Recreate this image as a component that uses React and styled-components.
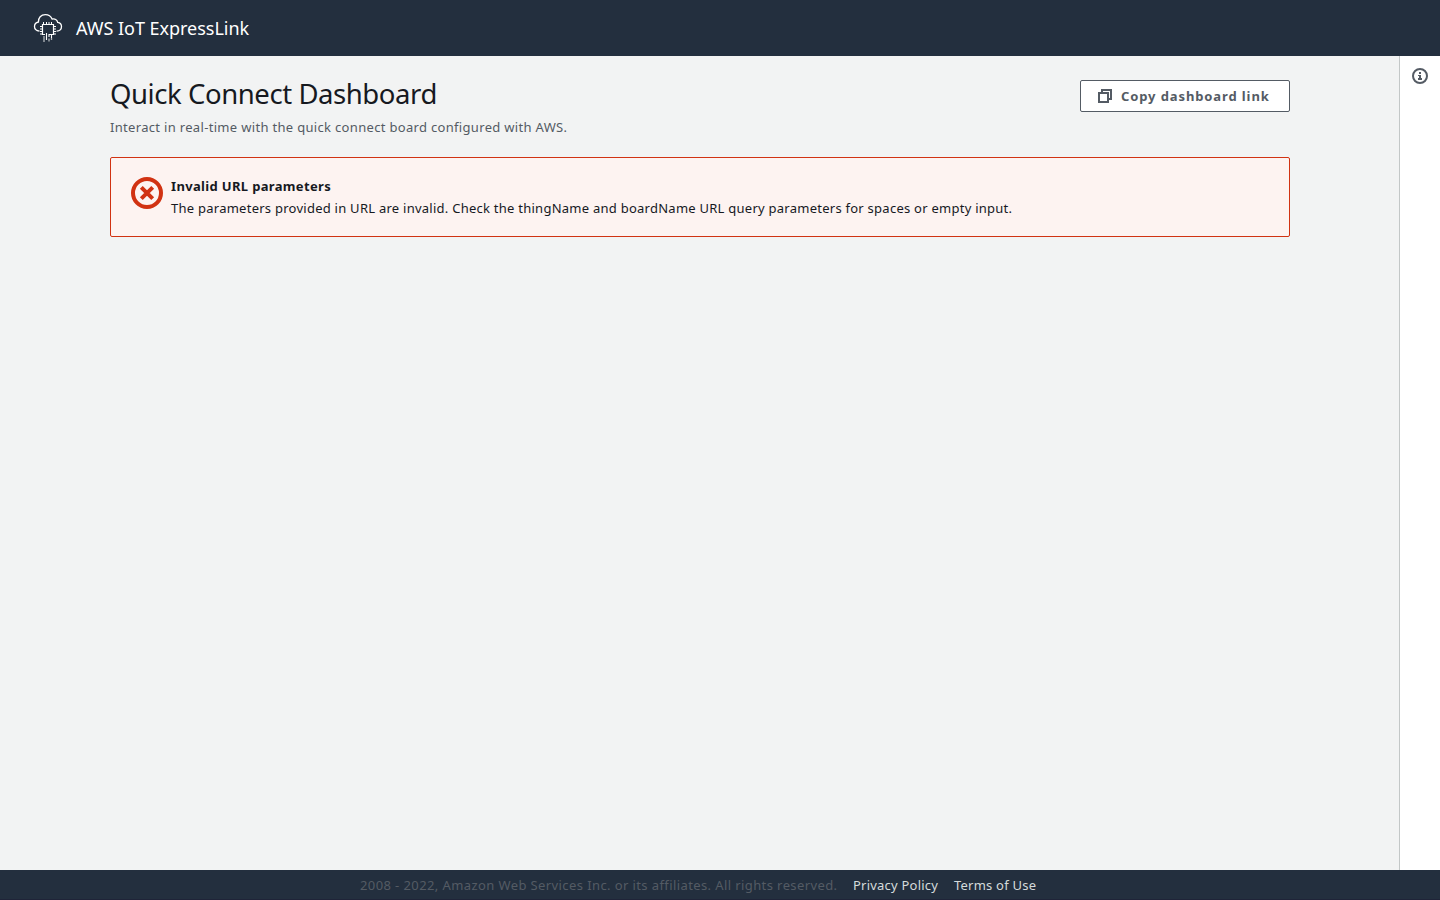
import React from "react";
import styled, { createGlobalStyle } from "styled-components";

const GlobalStyle = createGlobalStyle`
  * { box-sizing: border-box; }
  body {
    margin: 0;
    background: #f2f3f3;
    color: #16191f;
    font-family: "Noto Sans", "Open Sans", sans-serif;
    font-size: 13px;
    line-height: 22px;
  }
`;

const Page = styled.div`
  display: flex;
  flex-direction: column;
  height: 100vh;
  overflow: hidden;
`;

const TopBar = styled.header`
  display: flex;
  align-items: center;
  flex: 0 0 56px;
  padding-left: 32px;
  background: #232f3e;
`;

const Brand = styled.span`
  margin-left: 12px;
  color: #fff;
  font-size: 18px;
  letter-spacing: -0.03px;
  white-space: nowrap;
`;

const Body = styled.div`
  display: flex;
  flex: 1;
  min-height: 0;
`;

const Main = styled.main`
  flex: 1;
  padding: 20px 109px 0 110px;
`;

const PageHeader = styled.div`
  display: flex;
  justify-content: space-between;
  align-items: flex-start;
`;

const Title = styled.h1`
  margin: 0;
  font-size: 27.5px;
  font-weight: 400;
  line-height: 36px;
  letter-spacing: -0.43px;
  white-space: nowrap;
`;

const Description = styled.p`
  margin: 4px 0 0;
  color: #545b64;
  letter-spacing: 0.32px;
  white-space: nowrap;
`;

const CopyButton = styled.button`
  display: flex;
  align-items: center;
  width: 210px;
  height: 32px;
  margin-top: 4px;
  padding: 0 0 0 16px;
  border: 1px solid #545b64;
  border-radius: 2px;
  background: #fff;
  color: #545b64;
  font: 700 13px/22px "Noto Sans", sans-serif;
  letter-spacing: 0.89px;
  white-space: nowrap;

  svg { margin-right: 8px; }
`;

const Alert = styled.section`
  display: flex;
  align-items: flex-start;
  height: 80px;
  margin-top: 19px;
  padding: 17px 19px;
  border: 1px solid #d13212;
  border-radius: 2px;
  background: #fdf3f1;

  svg { flex: none; margin: 2px 8px 0 1px; }
`;

const AlertTitle = styled.div`
  font-weight: 700;
  letter-spacing: 0.34px;
  white-space: nowrap;
`;

const AlertText = styled.div`
  letter-spacing: 0.253px;
  white-space: nowrap;
`;

const InfoPanel = styled.aside`
  display: flex;
  justify-content: center;
  flex: 0 0 41px;
  padding-top: 12px;
  border-left: 1px solid #c3c7c7;
  background: #fff;
`;

const Footer = styled.footer`
  display: flex;
  flex: 0 0 30px;
  gap: 16px;
  padding: 4px 0 0 360px;
  border-bottom: 1px solid #1f2438;
  background: #232f3e;
  white-space: nowrap;
`;

const Copyright = styled.span`
  width: 477px;
  color: #545b64;
  letter-spacing: 0.4px;
`;

const FooterLink = styled.a`
  width: ${(p) => p.$width}px;
  color: #d5dbdb;
  letter-spacing: 0.22px;
  text-decoration: none;
`;

const CloudChipLogo = () => (
  <svg width="32" height="32" viewBox="0 0 32 32" fill="none" stroke="#fff">
    <path
      d="M7.500 19.200C4.300 18.700 2.500 17.200 2.500 14.500c0-2.300 1.400-4 3.900-4.500C6.200 5.800 9 2.600 13.300 2.600c3.200 0 5.600 1.500 6.800 4.500 2.700-.7 5 .6 5.600 3.300 2.400.4 3.800 1.800 3.800 4.200 0 2.700-1.600 4.500-4.900 4.600"
      strokeWidth="1.300"
    />
    <path d="M13 22.500H10.500V12.500H21.500V22.500H17" strokeWidth="1.200" />
    <path
      d="M11.500 10v2M14.500 10v2M17 10v2M19.500 10v2M8 14.500h2M8 17h2M8 19.500h2M8 22h2M22 14.500h2M22 17h2M22 19.500h2M22 22h2"
      strokeWidth="1"
    />
    <path d="M14.500 21v7M17 22v3M19.500 22v4" strokeWidth="1.100" />
    <path d="M12 24v6M17 26.500v3M19.500 26v2" strokeWidth="1.300" opacity=".65" />
  </svg>
);

const CopyIcon = () => (
  <svg width="16" height="16" viewBox="0 0 16 16" fill="none" stroke="#545b64" strokeWidth="2">
    <path d="M2 5h9v9H2z" />
    <path d="M5 5V2h9v9h-3" />
  </svg>
);

const ErrorIcon = () => (
  <svg width="32" height="32" viewBox="0 0 32 32" fill="none" stroke="#d13212" strokeWidth="4">
    <circle cx="16" cy="16" r="14" />
    <path d="M10.300 10.300l11.400 11.400M21.700 10.300L10.300 21.700" />
  </svg>
);

const InfoIcon = () => (
  <svg width="16" height="16" viewBox="0 0 16 16" fill="none" stroke="#545b64" strokeWidth="2">
    <circle cx="8" cy="8" r="7" />
    <path d="M7 4h2v2H7zM6 7h3v3h1v2H6v-2h1V8H6z" fill="#545b64" stroke="none" />
  </svg>
);

export default function App() {
  return (
    <Page>
      <GlobalStyle />
      <TopBar>
        <CloudChipLogo />
        <Brand>AWS IoT ExpressLink</Brand>
      </TopBar>
      <Body>
        <Main>
          <PageHeader>
            <div>
              <Title>Quick Connect Dashboard</Title>
              <Description>Interact in real-time with the quick connect board configured with AWS.</Description>
            </div>
            <CopyButton>
              <CopyIcon />
              Copy dashboard link
            </CopyButton>
          </PageHeader>
          <Alert>
            <ErrorIcon />
            <div>
              <AlertTitle>Invalid URL parameters</AlertTitle>
              <AlertText>
                The parameters provided in URL are invalid. Check the thingName and boardName URL query parameters for
                spaces or empty input.
              </AlertText>
            </div>
          </Alert>
        </Main>
        <InfoPanel>
          <InfoIcon />
        </InfoPanel>
      </Body>
      <Footer>
        <Copyright>2008 - 2022, Amazon Web Services Inc. or its affiliates. All rights reserved.</Copyright>
        <FooterLink $width={85}>Privacy Policy</FooterLink>
        <FooterLink $width={83}>Terms of Use</FooterLink>
      </Footer>
    </Page>
  );
}
